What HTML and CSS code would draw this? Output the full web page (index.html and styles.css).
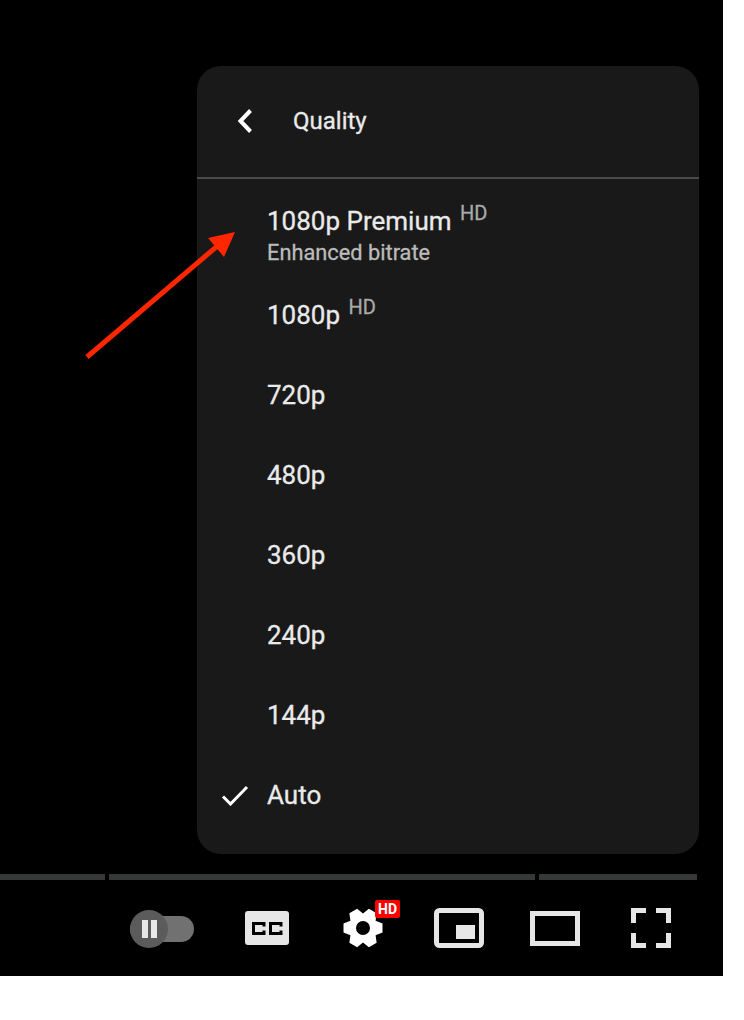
FILE: index.html
```html
<!DOCTYPE html>
<html lang="en">
<head>
  <meta charset="UTF-8">
  <title>Video player - Quality</title>
  <link rel="stylesheet" href="styles.css">
</head>
<body>
  <div class="player">
    <div class="menu">
      <div class="menu-header">
        <span class="back-slot">
          <svg width="16" height="24" viewBox="0 0 16 24"><path d="M13.5 1.5 3.500 12l10 10.500" fill="none" stroke="#fff" stroke-width="4"/></svg>
        </span>
        <span class="menu-title">Quality</span>
      </div>
      <ul class="quality-list">
        <li class="quality-row quality-row-tall">
          <span class="check-slot"></span>
          <div>
            <div class="quality-name">1080p Premium <sup class="hd-tag">HD</sup></div>
            <div class="quality-sub">Enhanced bitrate</div>
          </div>
        </li>
        <li class="quality-row">
          <span class="check-slot"></span>
          <div class="quality-name">1080p <sup class="hd-tag">HD</sup></div>
        </li>
        <li class="quality-row"><span class="check-slot"></span><div class="quality-name">720p</div></li>
        <li class="quality-row"><span class="check-slot"></span><div class="quality-name">480p</div></li>
        <li class="quality-row"><span class="check-slot"></span><div class="quality-name">360p</div></li>
        <li class="quality-row"><span class="check-slot"></span><div class="quality-name">240p</div></li>
        <li class="quality-row"><span class="check-slot"></span><div class="quality-name">144p</div></li>
        <li class="quality-row">
          <span class="check-slot">
            <svg width="28" height="21" viewBox="0 0 28 21"><path d="M2 11.500 9.500 19 26 2" fill="none" stroke="#fff" stroke-width="3"/></svg>
          </span>
          <div class="quality-name">Auto</div>
        </li>
      </ul>
    </div>

    <div class="progress">
      <span class="chapter chapter-a"></span>
      <span class="chapter chapter-b"></span>
      <span class="chapter chapter-c"></span>
    </div>

    <div class="controls">
      <div class="ctrl">
        <div class="autoplay">
          <span class="autoplay-knob"><i></i><i></i></span>
        </div>
      </div>
      <div class="ctrl">
        <svg width="44" height="34" viewBox="0 0 44 34">
          <rect width="44" height="34" rx="3" fill="#e6e6e6"/>
          <path d="M19 15.500V12.500H8.500v10H19V19.500M36 15.500V12.500H25.500v10H36V19.500" fill="none" stroke="#000" stroke-width="3"/>
        </svg>
      </div>
      <div class="ctrl">
        <svg width="40" height="40" viewBox="-20 -20 40 40"><path fill="#fff" fill-rule="evenodd" d="M19.500-4.500V4.500L12.600 7.250 13.650 14.640 5.850 19.140 0 14.500-5.850 19.140-13.650 14.640-12.600 7.250-19.500 4.500V-4.500L-12.600-7.250-13.650-14.640-5.850-19.140 0-14.500 5.850-19.140 13.650-14.640 12.600-7.250zM0-7A7 7 0 1 0 0 7 7 7 0 0 0 0-7z"/></svg>
        <span class="hd-badge">HD</span>
      </div>
      <div class="ctrl">
        <svg width="50" height="40" viewBox="0 0 50 40">
          <rect x="2.500" y="2.500" width="45" height="35" rx="3" fill="none" stroke="#e6e6e6" stroke-width="5"/>
          <rect x="22" y="17" width="19" height="14" fill="#e6e6e6"/>
        </svg>
      </div>
      <div class="ctrl">
        <svg width="50" height="35" viewBox="0 0 50 35">
          <rect x="2.500" y="2.500" width="45" height="30" fill="none" stroke="#e6e6e6" stroke-width="5"/>
        </svg>
      </div>
      <div class="ctrl">
        <svg width="40" height="40" viewBox="0 0 40 40">
          <path d="M2.500 15V2.500H15M25 2.500h12.500V15M37.500 25v12.500H25M15 37.500H2.500V25" fill="none" stroke="#e6e6e6" stroke-width="5"/>
        </svg>
      </div>
    </div>

    <svg class="arrow" width="744" height="976" viewBox="0 0 744 976">
      <path d="M87 357 222 242" stroke="#ff2600" stroke-width="5" fill="none"/>
      <path d="M235 232 208 238 224 257z" fill="#ff2600"/>
    </svg>
  </div>
</body>
</html>
```

FILE: styles.css
```css
body {
  margin: 0;
  background: #fff;
  font-family: Roboto, Arial, sans-serif;
}
.player {
  position: relative;
  width: 723px;
  height: 976px;
  padding-top: 66px;
  box-sizing: border-box;
  background: #000;
}
.menu {
  width: 502px;
  height: 788px;
  margin-left: 197px;
  background: #191919;
  border-radius: 24px;
  color: #eaeaea;
  -webkit-text-stroke: 0.3px;
}
.menu-header {
  display: flex;
  align-items: center;
  height: 113px;
  padding-bottom: 2px;
  border-bottom: 2px solid #4a4a4a;
  box-sizing: border-box;
}
.back-slot {
  display: flex;
  width: 96px;
  padding-left: 40px;
  box-sizing: border-box;
}
.menu-title {
  font-size: 24px;
}
.quality-list {
  list-style: none;
  margin: 0;
  padding: 0;
}
.quality-row {
  display: flex;
  align-items: center;
  height: 80px;
}
.quality-row-tall {
  height: 96px;
  padding-top: 19px;
  box-sizing: border-box;
}
.check-slot {
  display: flex;
  width: 70px;
  padding-left: 24px;
  box-sizing: border-box;
}
.quality-name {
  font-size: 26px;
  line-height: 32px;
}
.quality-sub {
  margin-top: 1px;
  font-size: 21.8px;
  line-height: 30px;
  color: #bbb;
}
.hd-tag {
  font-size: 20px;
  line-height: 0;
  color: #aaa;
  margin-left: 2px;
  vertical-align: 10px;
}
.progress {
  display: flex;
  gap: 4px;
  width: 697px;
  height: 6px;
  margin-top: 20px;
}
.chapter {
  background: #363837;
}
.chapter-a { width: 105px; }
.chapter-b { width: 426px; }
.chapter-c { width: 158px; }
.controls {
  display: flex;
  justify-content: flex-end;
  padding-right: 24px;
}
.ctrl {
  position: relative;
  display: flex;
  align-items: center;
  justify-content: center;
  width: 96px;
  height: 96px;
}
.autoplay {
  position: relative;
  width: 64px;
  height: 26px;
  margin-left: -18px;
  margin-top: 2px;
  border-radius: 13px;
  background: #717171;
}
.autoplay-knob {
  position: absolute;
  left: 0;
  top: -6px;
  display: flex;
  align-items: center;
  justify-content: center;
  gap: 3px;
  width: 38px;
  height: 38px;
  border-radius: 50%;
  background: #5b5b5b;
}
.autoplay-knob i {
  width: 6px;
  height: 18px;
  background: #e8e8e8;
}
.hd-badge {
  position: absolute;
  left: 60px;
  top: 20px;
  width: 25px;
  height: 18px;
  border-radius: 2px;
  background: #f00;
  color: #fff;
  font-size: 14px;
  font-weight: 700;
  line-height: 18px;
  text-align: center;
}
.arrow {
  position: absolute;
  left: 0;
  top: 0;
  pointer-events: none;
}
```
